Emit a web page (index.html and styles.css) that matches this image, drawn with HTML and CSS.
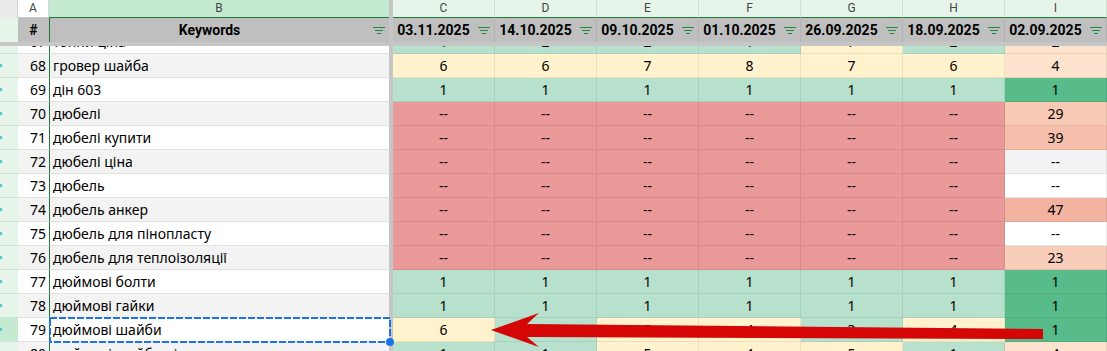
FILE: index.html
```html
<!DOCTYPE html>
<html lang="uk">
<head>
<meta charset="utf-8">
<title>Keywords</title>
<link rel="stylesheet" href="styles.css">
</head>
<body>
<div class="sheet">
  <div class="row letters">
    <div class="corner"></div>
    <div class="lt la">A</div>
    <div class="lt lb">B</div>
    <div class="vbar"></div>
    <div class="lt">C</div>
    <div class="lt">D</div>
    <div class="lt">E</div>
    <div class="lt">F</div>
    <div class="lt">G</div>
    <div class="lt">H</div>
    <div class="lt">I</div>
  </div>
  <div class="row head">
    <div class="strip"></div>
    <div class="hc hash"><span class="ht">#</span></div>
    <div class="hc hkw"><span class="ht">Keywords</span><svg class="flt" viewBox="0 0 12 8"><path d="M0 .5h12M2 3.5h8M4 6.5h4"/></svg></div>
    <div class="vbar"></div>
    <div class="hc"><span class="ht">03.11.2025</span><svg class="flt" viewBox="0 0 12 8"><path d="M0 .5h12M2 3.5h8M4 6.5h4"/></svg></div>
    <div class="hc"><span class="ht">14.10.2025</span><svg class="flt" viewBox="0 0 12 8"><path d="M0 .5h12M2 3.5h8M4 6.5h4"/></svg></div>
    <div class="hc"><span class="ht">09.10.2025</span><svg class="flt" viewBox="0 0 12 8"><path d="M0 .5h12M2 3.5h8M4 6.5h4"/></svg></div>
    <div class="hc"><span class="ht">01.10.2025</span><svg class="flt" viewBox="0 0 12 8"><path d="M0 .5h12M2 3.5h8M4 6.5h4"/></svg></div>
    <div class="hc"><span class="ht">26.09.2025</span><svg class="flt" viewBox="0 0 12 8"><path d="M0 .5h12M2 3.5h8M4 6.5h4"/></svg></div>
    <div class="hc"><span class="ht">18.09.2025</span><svg class="flt" viewBox="0 0 12 8"><path d="M0 .5h12M2 3.5h8M4 6.5h4"/></svg></div>
    <div class="hc"><span class="ht">02.09.2025</span><svg class="flt" viewBox="0 0 12 8"><path d="M0 .5h12M2 3.5h8M4 6.5h4"/></svg></div>
  </div>
  <div class="hbar"></div>
  <div class="body">
    <div class="scroll">
      <div class="row data">
        <div class="strip"></div><div class="num">67</div><div class="kw">тонни ціна</div><div class="vbar"></div>
        <div class="c g">1</div><div class="c g">2</div><div class="c g">2</div><div class="c g">1</div><div class="c y">7</div><div class="c g">2</div><div class="c p0">2</div>
      </div>
      <div class="row data band">
        <div class="strip"></div><div class="num">68</div><div class="kw">гровер шайба</div><div class="vbar"></div>
        <div class="c y">6</div><div class="c y">6</div><div class="c y">7</div><div class="c y">8</div><div class="c y">7</div><div class="c y">6</div><div class="c p0">4</div>
      </div>
      <div class="row data">
        <div class="strip"></div><div class="num">69</div><div class="kw">дін 603</div><div class="vbar"></div>
        <div class="c g">1</div><div class="c g">1</div><div class="c g">1</div><div class="c g">1</div><div class="c g">1</div><div class="c g">1</div><div class="c dg">1</div>
      </div>
      <div class="row data band">
        <div class="strip"></div><div class="num">70</div><div class="kw">дюбелі</div><div class="vbar"></div>
        <div class="c rd">--</div><div class="c rd">--</div><div class="c rd">--</div><div class="c rd">--</div><div class="c rd">--</div><div class="c rd">--</div><div class="c p2">29</div>
      </div>
      <div class="row data">
        <div class="strip"></div><div class="num">71</div><div class="kw">дюбелі купити</div><div class="vbar"></div>
        <div class="c rd">--</div><div class="c rd">--</div><div class="c rd">--</div><div class="c rd">--</div><div class="c rd">--</div><div class="c rd">--</div><div class="c p3">39</div>
      </div>
      <div class="row data band">
        <div class="strip"></div><div class="num">72</div><div class="kw">дюбелі ціна</div><div class="vbar"></div>
        <div class="c rd">--</div><div class="c rd">--</div><div class="c rd">--</div><div class="c rd">--</div><div class="c rd">--</div><div class="c rd">--</div><div class="c e">--</div>
      </div>
      <div class="row data">
        <div class="strip"></div><div class="num">73</div><div class="kw">дюбель</div><div class="vbar"></div>
        <div class="c rd">--</div><div class="c rd">--</div><div class="c rd">--</div><div class="c rd">--</div><div class="c rd">--</div><div class="c rd">--</div><div class="c e">--</div>
      </div>
      <div class="row data band">
        <div class="strip"></div><div class="num">74</div><div class="kw">дюбель анкер</div><div class="vbar"></div>
        <div class="c rd">--</div><div class="c rd">--</div><div class="c rd">--</div><div class="c rd">--</div><div class="c rd">--</div><div class="c rd">--</div><div class="c p4">47</div>
      </div>
      <div class="row data">
        <div class="strip"></div><div class="num">75</div><div class="kw">дюбель для пінопласту</div><div class="vbar"></div>
        <div class="c rd">--</div><div class="c rd">--</div><div class="c rd">--</div><div class="c rd">--</div><div class="c rd">--</div><div class="c rd">--</div><div class="c e">--</div>
      </div>
      <div class="row data band">
        <div class="strip"></div><div class="num">76</div><div class="kw">дюбель для теплоізоляції</div><div class="vbar"></div>
        <div class="c rd">--</div><div class="c rd">--</div><div class="c rd">--</div><div class="c rd">--</div><div class="c rd">--</div><div class="c rd">--</div><div class="c p1">23</div>
      </div>
      <div class="row data">
        <div class="strip"></div><div class="num">77</div><div class="kw">дюймові болти</div><div class="vbar"></div>
        <div class="c g">1</div><div class="c g">1</div><div class="c g">1</div><div class="c g">1</div><div class="c g">1</div><div class="c g">1</div><div class="c dg">1</div>
      </div>
      <div class="row data band">
        <div class="strip"></div><div class="num">78</div><div class="kw">дюймові гайки</div><div class="vbar"></div>
        <div class="c g">1</div><div class="c g">1</div><div class="c g">1</div><div class="c g">1</div><div class="c g">1</div><div class="c g">1</div><div class="c dg">1</div>
      </div>
      <div class="row data">
        <div class="strip active"></div><div class="num">79</div>
        <div class="kw sel">дюймові шайби<svg class="selbox" preserveAspectRatio="none"><rect x="1" y="1" width="calc(100% - 2px)" height="calc(100% - 2px)"/></svg><span class="handle"></span></div>
        <div class="vbar"></div>
        <div class="c y">6</div><div class="c g">1</div><div class="c y">5</div><div class="c y">4</div><div class="c g">3</div><div class="c y">4</div><div class="c dg">1</div>
      </div>
      <div class="row data band">
        <div class="strip"></div><div class="num">80</div><div class="kw">дюймові шайби ціна</div><div class="vbar"></div>
        <div class="c g">1</div><div class="c g">1</div><div class="c y">5</div><div class="c y">4</div><div class="c y">5</div><div class="c g">1</div><div class="c p0">4</div>
      </div>
    </div>
  </div>
  <svg class="arrow" viewBox="0 0 1107 351">
    <polygon points="491,330 539,313 527,324 1043,329 1043,339 527,337 539,347"/>
  </svg>
</div>
</body>
</html>
```
FILE: styles.css
```css
* {
  box-sizing: border-box;
  margin: 0;
  padding: 0;
}

body {
  margin: 0;
  background: #ffffff;
  font-family: "Noto Sans", "Open Sans", sans-serif;
  font-size: 14px;
  color: #000000;
  overflow: hidden;
}

.sheet {
  position: relative;
  width: 1107px;
  height: 351px;
  overflow: hidden;
}

.row {
  display: grid;
  grid-template-columns: 18px 31px 340px 4px repeat(7, 102px);
}

.vbar {
  background: #c6c6c6;
}

/* column letters */
.letters {
  height: 18px;
}

.corner {
  background: #ebebeb;
  border-right: 1px solid #d0d0d0;
}

.lt {
  font-family: Roboto, "Liberation Sans", sans-serif;
  font-size: 12px;
  color: #444746;
  text-align: center;
  line-height: 17px;
  background: #e6f4ea;
  border-right: 1px solid #cde1d2;
  border-bottom: 1px solid #1e7a36;
}

.lt.la {
  background: #ffffff;
  border-right: 1px solid #d6d6d6;
  border-bottom: 1px solid #c8c8c8;
}

.lt.lb {
  background: #c4ebd1;
  border-right: 0;
}

/* header row */
.head {
  height: 24px;
}

.head .strip {
  background: #e6f4ea;
}

.hc {
  display: flex;
  align-items: center;
  background: #bfbfbf;
  border-right: 1px solid #b3b3b3;
  font-family: Roboto, "Liberation Sans", sans-serif;
  font-weight: 700;
  font-size: 14px;
  color: #000000;
}

.hc.hash {
  border-right: 0;
}

.hc.hkw {
  border-left: 1px solid #1e7a36;
  border-right: 0;
}

.ht {
  flex: 1;
  text-align: center;
}

.flt {
  width: 12px;
  height: 8px;
  margin: 1px 4px 0 4px;
  fill: none;
  stroke: #1e8e3e;
  stroke-width: 1;
}

.hbar {
  height: 4px;
  background: #c6c6c6;
}

/* body */
.body {
  height: 305px;
  overflow: hidden;
}

.scroll {
  margin-top: -16px;
}

.data {
  height: 24px;
}

.data > div {
  border-bottom: 1px solid #e2e2e2;
  line-height: 23px;
  white-space: nowrap;
}

.data > .vbar {
  border-bottom: 0;
}

.strip {
  position: relative;
  background: #e6f4ea;
}

.data > .strip {
  border-bottom-color: #cfe2d4;
}

.data > .strip::before {
  content: "";
  position: absolute;
  left: 0;
  top: 10px;
  width: 2px;
  height: 3px;
  background: #53c6dc;
}

.strip.active {
  background: #c4ebd1;
}

.num {
  text-align: right;
  padding-right: 3px;
  background: #ffffff;
}

.kw {
  border-left: 1px solid #1e7a36;
  padding-left: 3px;
  background: #ffffff;
  overflow: hidden;
}

.c {
  text-align: center;
  border-right: 1px solid rgba(0, 0, 0, 0.08);
  background: #ffffff;
}

.data > .c {
  border-bottom-color: rgba(0, 0, 0, 0.08);
}

.data > .c.e {
  border-bottom-color: #e2e2e2;
}

.band .num,
.band .kw,
.band .c.e {
  background: #f3f3f3;
}

.g { background: #b7e1cd; }
.y { background: #fff2cc; }
.rd { background: #ea9999; }
.dg { background: #57bb8a; }
.p0 { background: #fde3cd; }
.p1 { background: #f8cdba; }
.p2 { background: #f8c9b5; }
.p3 { background: #f5bfab; }
.p4 { background: #f2b4a0; }

/* selected cell */
.kw.sel {
  position: relative;
  overflow: visible;
}

.selbox {
  position: absolute;
  left: -1px;
  top: -1px;
  width: 342px;
  height: 26px;
  fill: none;
  stroke: #1a73e8;
  stroke-width: 2;
  stroke-dasharray: 7 2;
}

.handle {
  position: absolute;
  right: -5px;
  bottom: -5px;
  width: 8px;
  height: 8px;
  border-radius: 50%;
  background: #1a73e8;
}

/* annotation arrow */
.arrow {
  position: absolute;
  left: 0;
  top: 0;
  width: 1107px;
  height: 351px;
  fill: #d40606;
  pointer-events: none;
}
```
